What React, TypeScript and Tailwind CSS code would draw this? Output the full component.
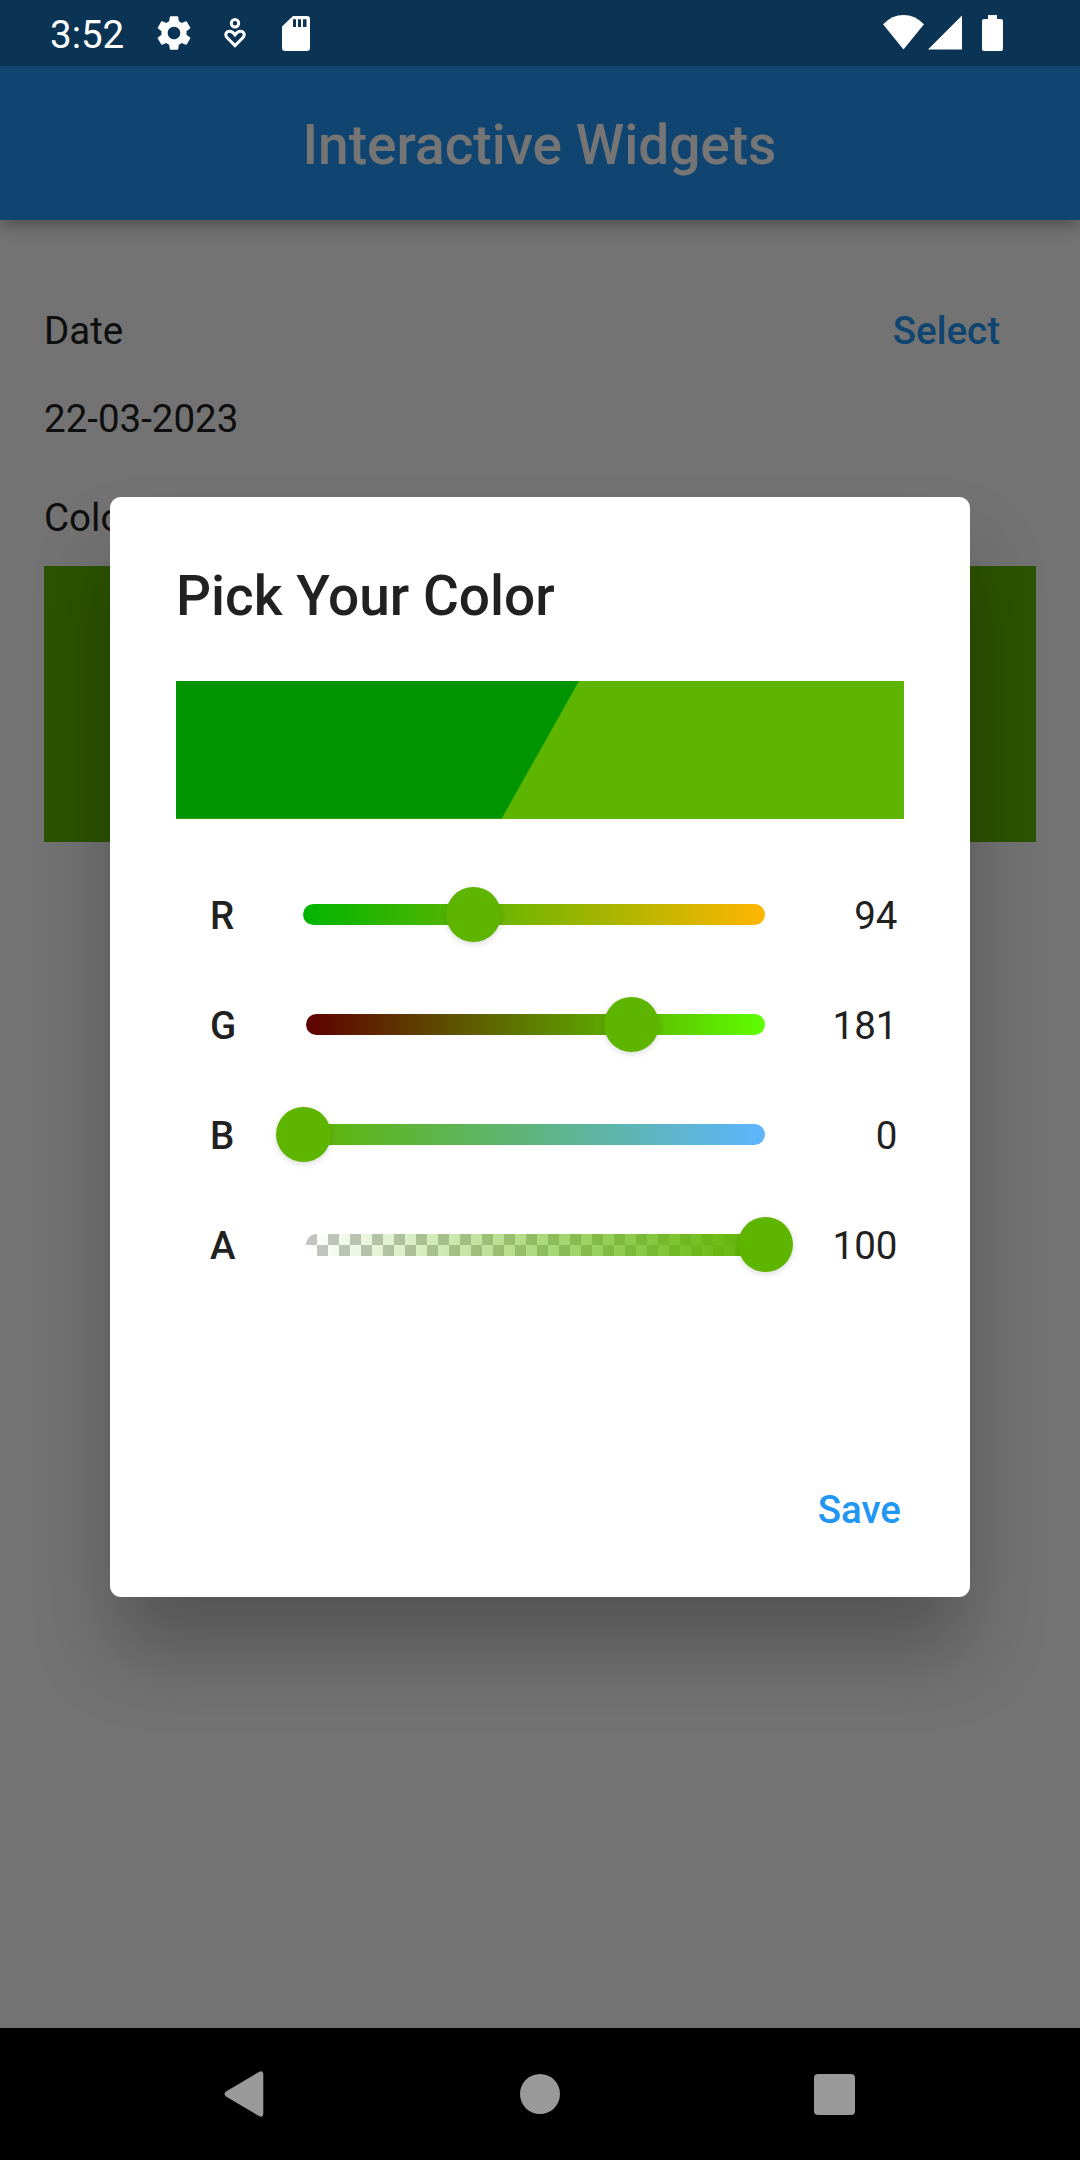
import type { ReactNode } from "react";
import { MdSettings } from "react-icons/md";

type Channel = {
  label: string;
  value: number;
  max: number;
  track: string;
  inset: boolean;
};

const channels: Channel[] = [
  { label: "R", value: 94, max: 255, track: "bg-linear-to-r/srgb from-[#00b500] to-[#ffb500]", inset: false },
  { label: "G", value: 181, max: 255, track: "bg-linear-to-r/srgb from-[#5e0000] to-[#5eff00]", inset: true },
  { label: "B", value: 0, max: 255, track: "bg-linear-to-r/srgb from-[#5eb500] to-[#5eb5ff]", inset: false },
  { label: "A", value: 100, max: 100, track: "checker", inset: true },
];

function StatusBar() {
  return (
    <div className="flex h-[66px] items-center justify-between pr-[77px] pl-[50px] text-white">
      <div className="flex items-center">
        <span className="mt-[4px] w-[103px] text-[38.5px] leading-[62px]">3:52</span>
        <MdSettings className="size-[42px]" />
        <svg className="ml-[29px] h-[30px] w-[22px]" viewBox="0 0 22 30" fill="none" stroke="currentColor">
          <circle cx="11" cy="5.3" r="3.7" strokeWidth="3" />
          <path
            d="M11 27.6 L3.2 19.8 C0.4 16.6 2.2 13.2 5.6 13.2 C7.8 13.2 9.2 14.4 11 16.8 C12.8 14.4 14.2 13.2 16.4 13.2 C19.8 13.2 21.6 16.6 18.8 19.8 Z"
            strokeWidth="3"
          />
        </svg>
        <svg className="mt-px ml-[36px] h-[35px] w-[28px]" viewBox="0 0 28 35" fill="currentColor">
          <path
            fillRule="evenodd"
            d="M11 0H25Q28 0 28 3V32Q28 35 25 35H3Q0 35 0 32V10.5Z M11 3.3V11H14V3.3Z M16 3.3V11H19V3.3Z M21 3.3V11H24.5V3.3Z"
          />
        </svg>
      </div>
      <div className="flex items-start">
        <svg className="h-[35px] w-[41px]" viewBox="0 0 41 35" fill="currentColor">
          <path d="M20.5 34.5L0 9.3Q9 0 20.5 0T41 9.3Z" />
        </svg>
        <svg className="ml-[4px] h-[35px] w-[34px]" viewBox="0 0 34 35" fill="currentColor">
          <path d="M34 0.5V34.5H0Z" />
        </svg>
        <svg className="ml-[20px] h-[36px] w-[21px]" viewBox="0 0 21 36" fill="currentColor">
          <path d="M6 0H15V4H19Q21 4 21 6V34Q21 36 19 36H2Q0 36 0 34V6Q0 4 2 4H6Z" />
        </svg>
      </div>
    </div>
  );
}

function Slider({ channel }: { channel: Channel }) {
  const left = `${(channel.value / channel.max) * 100}%`;
  return (
    <div className="flex h-[110px] items-center text-[38.5px] text-[#212121]">
      <span className="w-[93px] pt-[3px] font-medium">{channel.label}</span>
      <div className="relative h-[22px] w-[462px]">
        {channel.track === "checker" ? (
          <div className="ml-[3px] h-[22px] overflow-hidden rounded-l-[11px] bg-[conic-gradient(#fff_25%,#c4c4c4_0_50%,#fff_0_75%,#c4c4c4_0)] bg-[length:22px_22px]">
            <div className="h-full bg-linear-to-r/srgb from-[#5eb50000] to-[#5eb500]" />
          </div>
        ) : (
          <div className={`h-[21.6px] rounded-[11px] ${channel.inset ? "ml-[3px]" : ""} ${channel.track}`} />
        )}
        <div
          className="absolute -top-[17px] -ml-[27px] size-[55px] rounded-full bg-[#5eb500] shadow-[0_2px_6px_rgba(0,0,0,0.15)]"
          style={{ left }}
        />
      </div>
      <span className="flex-1 pt-[3px] text-right">{channel.value}</span>
    </div>
  );
}

function Dialog() {
  return (
    <div className="flex h-[1100px] w-[860px] flex-col rounded-[11px] bg-white px-[66px] shadow-[0_56px_80px_-4px_rgba(0,0,0,0.27)]">
      <h2 className="mt-[66px] text-[55px] leading-[66px] font-medium text-[#212121]">Pick Your Color</h2>
      <div className="mt-[52px] h-[137.5px] shrink-0 bg-[#5eb500]">
        <div className="h-full w-[403px] bg-[#009400] [clip-path:polygon(0_0,100%_0,325.7px_100%,0_100%)]" />
      </div>
      <div className="mt-[41px] pr-[6.5px] pl-[34px]">
        {channels.map((c) => (
          <Slider key={c.label} channel={c} />
        ))}
      </div>
      <button className="mt-auto mr-[3px] mb-[60px] self-end text-[38.5px] leading-[54px] font-medium text-[#2196f3]">
        Save
      </button>
    </div>
  );
}

function NavBar() {
  return (
    <nav className="flex h-[132px] items-center justify-between bg-black pr-[225px] pl-[224px] text-[#999]">
      <svg className="h-[46px] w-[40px]" viewBox="0 0 40 46" fill="currentColor">
        <path d="M34.5 1.2Q39 -1.5 39.3 3V43Q39 47.5 34.5 44.8L2 25.5Q-1 23 2 20.5Z" />
      </svg>
      <div className="ml-[2px] size-[40px] rounded-full bg-[#999]" />
      <div className="size-[41px] rounded-[4px] bg-[#999]" />
    </nav>
  );
}

function Text({ children }: { children: ReactNode }) {
  return <p className="text-[38.5px] leading-[44px] text-[#212121]">{children}</p>;
}

export default function App() {
  return (
    <div className="flex h-[2160px] w-[1080px] flex-col overflow-hidden bg-black font-[Roboto,sans-serif]">
      <div className="relative h-[2028px] bg-[#fafafa]">
        <header className="relative h-[220px] bg-[#2196f3] shadow-[0_7px_14px_-1px_rgba(0,0,0,0.28)]">
          <div className="h-[66px] bg-black/25" />
          <h1 className="pr-px text-center text-[55px] leading-[158px] font-medium text-white">Interactive Widgets</h1>
        </header>
        <main className="px-[44px] pt-[89px]">
          <div className="flex items-center justify-between pr-[36px]">
            <Text>Date</Text>
            <button className="text-[38.5px] leading-[44px] font-medium text-[#2196f3]">Select</button>
          </div>
          <div className="mt-[44px]">
            <Text>22-03-2023</Text>
          </div>
          <div className="mt-[55px]">
            <Text>Color</Text>
          </div>
          <div className="mt-[26px] h-[275.5px] bg-[#5eb500]" />
        </main>
        <div className="absolute inset-0 z-10 bg-black/54">
          <StatusBar />
          <div className="flex justify-center pt-[431px]">
            <Dialog />
          </div>
        </div>
      </div>
      <NavBar />
    </div>
  );
}
